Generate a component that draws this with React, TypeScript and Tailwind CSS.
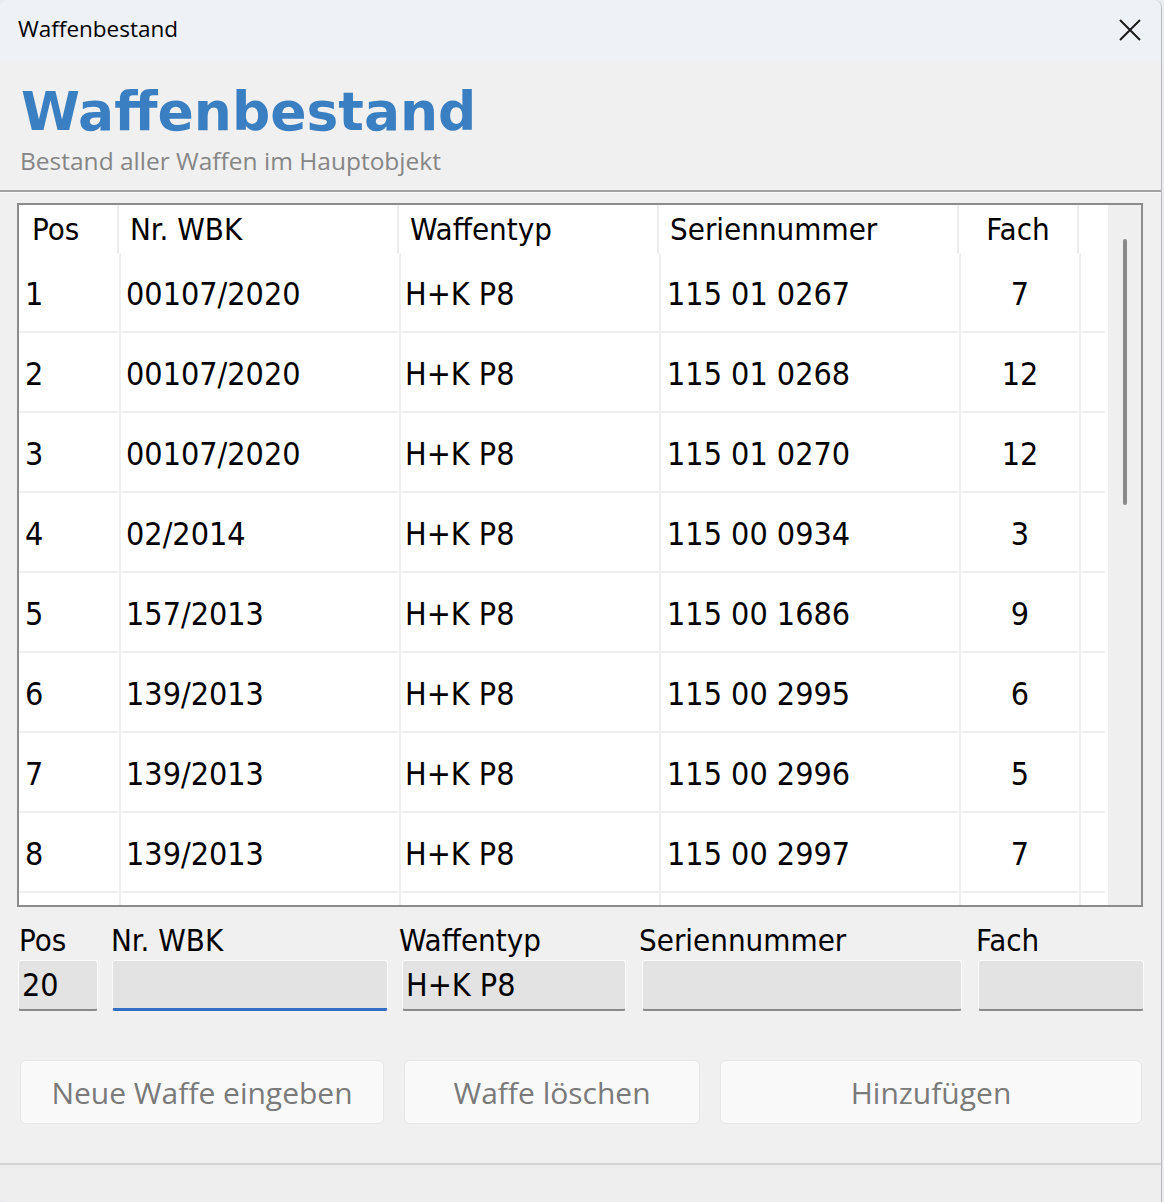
import React from 'react';

interface Weapon {
  pos: string;
  wbk: string;
  typ: string;
  serial: string;
  fach: string;
}

const WEAPONS: Weapon[] = [
  { pos: '1', wbk: '00107/2020', typ: 'H+K P8', serial: '115 01 0267', fach: '7' },
  { pos: '2', wbk: '00107/2020', typ: 'H+K P8', serial: '115 01 0268', fach: '12' },
  { pos: '3', wbk: '00107/2020', typ: 'H+K P8', serial: '115 01 0270', fach: '12' },
  { pos: '4', wbk: '02/2014', typ: 'H+K P8', serial: '115 00 0934', fach: '3' },
  { pos: '5', wbk: '157/2013', typ: 'H+K P8', serial: '115 00 1686', fach: '9' },
  { pos: '6', wbk: '139/2013', typ: 'H+K P8', serial: '115 00 2995', fach: '6' },
  { pos: '7', wbk: '139/2013', typ: 'H+K P8', serial: '115 00 2996', fach: '5' },
  { pos: '8', wbk: '139/2013', typ: 'H+K P8', serial: '115 00 2997', fach: '7' },
  { pos: '9', wbk: '139/2013', typ: 'H+K P8', serial: '115 00 2998', fach: '4' },
];

const tahoma = "font-['DejaVu_Sans_Condensed','Liberation_Sans',sans-serif]";
const segoe = "font-['Open_Sans','Noto_Sans',sans-serif]";

function FormField({ label, value, width, labelClass, active }: { label: string; value: string; width: string; labelClass: string; active?: boolean }) {
  return (
    <div className={`flex flex-col ${width}`}>
      <span className={`h-[40px] text-[31px] leading-[40px] text-black whitespace-nowrap ${labelClass}`}>{label}</span>
      <div
        className={`h-[51px] flex items-center px-[3px] bg-[#e3e3e3] border border-[#fbfbfb] rounded-[3px] text-[32px] leading-none text-black ${
          active ? 'border-b-[3px] border-b-[#2f6fc4]' : 'border-b-2 border-b-[#8a8a8a]'
        }`}
      >
        {value}
      </div>
    </div>
  );
}

export default function App() {
  return (
    <div className="w-[1164px] h-[1202px] bg-[#e9edf2] overflow-hidden">
      <div className="w-[1162px] h-[1202px] bg-[#f0f0f0] border-r border-[#b8b8b8] rounded-t-[8px] rounded-bl-[8px] flex flex-col overflow-hidden">
        {/* Title bar */}
        <div className="h-[60px] bg-[#eef2f7] flex items-center justify-between pl-[18px] pr-[20px]">
          <span className={`${segoe} text-[22.5px] text-black -mt-[2px]`}>Waffenbestand</span>
          <svg width="22" height="22" viewBox="0 0 22 22">
            <path d="M1 1 L21 21 M21 1 L1 21" stroke="#1a1a1a" strokeWidth="2" />
          </svg>
        </div>

        {/* Header */}
        <div className="h-[130px] pl-[22px] pt-[25px]">
          <h1 className="font-['DejaVu_Sans',sans-serif] font-bold text-[53.5px] leading-none text-[#3a7fc1] -ml-[1px]">Waffenbestand</h1>
          <p className={`${segoe} text-[24.5px] leading-none text-[#868686] mt-[10px] -ml-[2px]`}>Bestand aller Waffen im Hauptobjekt</p>
        </div>
        <div className="h-[2px] bg-[#a3a3a3]" />
        <div className="h-[1px] bg-[#fafafa]" />

        {/* Table */}
        <div className={`${tahoma} mt-[10px] ml-[17px] w-[1126px] h-[704px] border-2 border-[#8c8c8c] bg-white flex overflow-hidden`}>
          <div className="flex-1 flex flex-col overflow-hidden">
            <div className="h-[48px] flex shrink-0 text-[31px] text-black">
              <div className="w-[100px] pl-[13px] flex items-center border-r-2 border-[#ececec]">Pos</div>
              <div className="w-[280px] pl-[11px] flex items-center border-r-2 border-[#ececec]">Nr. WBK</div>
              <div className="w-[260px] pl-[11px] flex items-center border-r-2 border-[#ececec]">Waffentyp</div>
              <div className="w-[300px] pl-[11px] flex items-center border-r-2 border-[#ececec]">Seriennummer</div>
              <div className="w-[120px] flex items-center justify-center border-r-2 border-[#ececec]">Fach</div>
            </div>
            {WEAPONS.map(w => (
              <div key={w.pos} className="h-[80px] shrink-0 flex border-b-2 border-[#f0f0f0] mr-[3px] text-[32px] text-black">
                <div className="w-[102px] pl-[6px] pt-[4px] flex items-center border-r-2 border-[#f0f0f0]">{w.pos}</div>
                <div className="w-[280px] pl-[5px] pt-[4px] flex items-center border-r-2 border-[#f0f0f0]">{w.wbk}</div>
                <div className="w-[260px] pl-[4px] pt-[4px] flex items-center border-r-2 border-[#f0f0f0]">{w.typ}</div>
                <div className="w-[300px] pl-[6px] pt-[4px] flex items-center border-r-2 border-[#f0f0f0]">{w.serial}</div>
                <div className="w-[120px] pt-[4px] flex items-center justify-center border-r-2 border-[#f0f0f0]">{w.fach}</div>
              </div>
            ))}
          </div>
          {/* Scrollbar */}
          <div className="w-[33px] bg-[#efefef] pt-[34px] flex justify-center">
            <div className="w-[4px] h-[266px] rounded-full bg-[#8a8a8a]" />
          </div>
        </div>

        {/* Edit fields */}
        <div className={`${tahoma} mt-[13px] ml-[18px] flex`}>
          <FormField label="Pos" value="20" width="w-[80px]" labelClass="ml-[1px]" />
          <FormField label="Nr. WBK" value="" width="w-[276px] ml-[14px]" labelClass="-ml-[1px]" active />
          <FormField label="Waffentyp" value="H+K P8" width="w-[224px] ml-[14px]" labelClass="-ml-[3px]" />
          <FormField label="Seriennummer" value="" width="w-[320px] ml-[16px]" labelClass="-ml-[3px]" />
          <FormField label="Fach" value="" width="w-[166px] ml-[16px]" labelClass="-ml-[2px]" />
        </div>

        {/* Buttons */}
        <div className={`${segoe} mt-[49px] ml-[20px] flex gap-[20px] text-[30px] text-[#7a7a7a]`}>
          <button className="w-[364px] h-[64px] bg-[#f9f9f9] border border-[#e6e6e6] rounded-[6px]">Neue Waffe eingeben</button>
          <button className="w-[296px] h-[64px] bg-[#f9f9f9] border border-[#e6e6e6] rounded-[6px]">Waffe löschen</button>
          <button className="w-[422px] h-[64px] bg-[#f9f9f9] border border-[#e6e6e6] rounded-[6px]">Hinzufügen</button>
        </div>

        <div className="mt-[39px] h-[2px] bg-[#d3d3d3]" />
        <div className="flex-1 bg-[#eeeeee]" />
      </div>
    </div>
  );
}
